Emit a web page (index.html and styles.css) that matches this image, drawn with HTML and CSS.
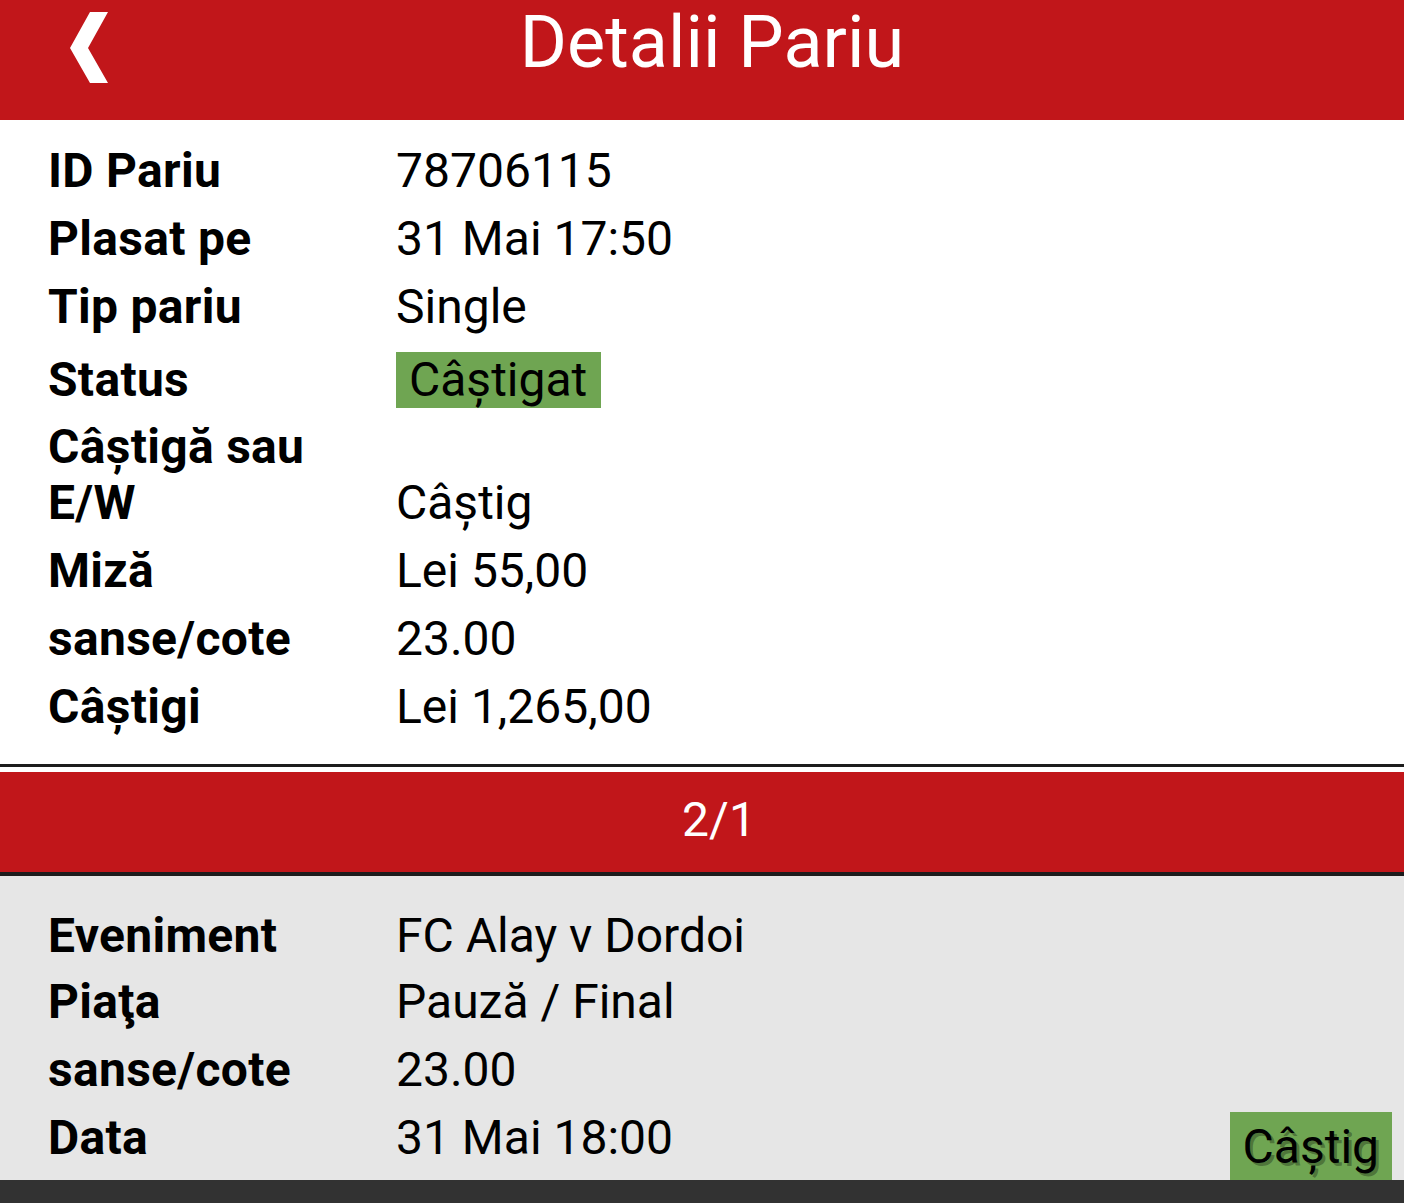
FILE: index.html
```html
<!DOCTYPE html>
<html lang="ro">
<head>
  <meta charset="UTF-8">
  <meta name="viewport" content="width=device-width, initial-scale=1.0">
  <title>Detalii Pariu</title>
  <link rel="stylesheet" href="styles.css">
</head>
<body>
  <header class="topbar">
    <a class="back-btn" href="#" aria-label="Înapoi">
      <svg width="40" height="72" viewBox="0 0 40 72">
        <polygon points="21,0 39,0 19,36 39,71 21,71 1,36" fill="#fff"/>
      </svg>
    </a>
    <h1 class="title">Detalii Pariu</h1>
    <span></span>
  </header>

  <section class="summary">
    <div class="row">
      <div class="label">ID Pariu</div>
      <div class="value">78706115</div>
    </div>
    <div class="row">
      <div class="label">Plasat pe</div>
      <div class="value">31 Mai 17:50</div>
    </div>
    <div class="row">
      <div class="label">Tip pariu</div>
      <div class="value">Single</div>
    </div>
    <div class="row row-status">
      <div class="label">Status</div>
      <div class="value"><span class="badge">Câștigat</span></div>
    </div>
    <div class="row row-bottom">
      <div class="label">Câștigă sau E/W</div>
      <div class="value">Câștig</div>
    </div>
    <div class="row">
      <div class="label">Miză</div>
      <div class="value">Lei 55,00</div>
    </div>
    <div class="row">
      <div class="label">sanse/cote</div>
      <div class="value">23.00</div>
    </div>
    <div class="row">
      <div class="label">Câștigi</div>
      <div class="value">Lei 1,265,00</div>
    </div>
  </section>

  <div class="leg-head">2/1</div>

  <section class="leg">
    <div class="row">
      <div class="label">Eveniment</div>
      <div class="value">FC Alay v Dordoi</div>
    </div>
    <div class="row">
      <div class="label">Piaţa</div>
      <div class="value">Pauză / Final</div>
    </div>
    <div class="row">
      <div class="label">sanse/cote</div>
      <div class="value">23.00</div>
    </div>
    <div class="row">
      <div class="label">Data</div>
      <div class="value">31 Mai 18:00</div>
    </div>
    <span class="badge leg-result">Câștig</span>
  </section>

  <footer class="bottombar"></footer>
</body>
</html>
```

FILE: styles.css
```css
/* Základ */
body {
  margin: 0;
  height: 1203px;
  overflow: hidden;
  background: #fff;
  color: #000;
  font-family: Roboto, "Noto Sans", sans-serif;
  font-size: 48px;
}

/* Horní lišta */
.topbar {
  display: grid;
  grid-template-columns: 1fr auto 1fr;
  align-items: start;
  height: 120px;
  padding-left: 20px;
  background: #c1161a;
  color: #fff;
}
.back-btn {
  display: block;
  margin: 12px 0 0 49px;
  width: 40px;
  height: 72px;
}
.back-btn svg {
  display: block;
}
.title {
  margin: 0;
  font-size: 72px;
  font-weight: 400;
  line-height: 86px;
}

/* Řádky s údaji */
.row {
  display: flex;
  align-items: center;
  padding: 6px 0 6px 48px;
  line-height: 56px;
}
.label {
  width: 348px;
  font-weight: 700;
  letter-spacing: 0.3px;
}
.value {
  flex: 1;
}
.row-status {
  padding-top: 11px;
  padding-bottom: 5px;
}
.row-bottom {
  align-items: flex-end;
}

.summary {
  padding: 17px 0 23px;
  border-bottom: 3px solid #1c1c1c;
}

.badge {
  display: inline-block;
  padding: 0 14px 0 13px;
  background: #6fa552;
  line-height: 56px;
}

/* Pruh s kurzem */
.leg-head {
  margin-top: 5px;
  height: 100px;
  line-height: 96px;
  padding-left: 34px;
  text-align: center;
  background: #c1161a;
  color: #fff;
  border-bottom: 4px solid #1c1c1c;
}

.leg {
  position: relative;
  height: 303px;
  padding-top: 24px;
  background: #e6e6e6;
}
.leg .row:first-child {
  padding-top: 8px;
  padding-bottom: 4px;
}
.leg-result {
  position: absolute;
  top: 236px;
  right: 12px;
  line-height: 70px;
  padding: 0 13px;
  text-shadow: 3px 3px 0 rgba(0,0,0,0.3);
}

.bottombar {
  position: fixed;
  left: 0;
  right: 0;
  bottom: 0;
  height: 23px;
  background: #323232;
}
```
